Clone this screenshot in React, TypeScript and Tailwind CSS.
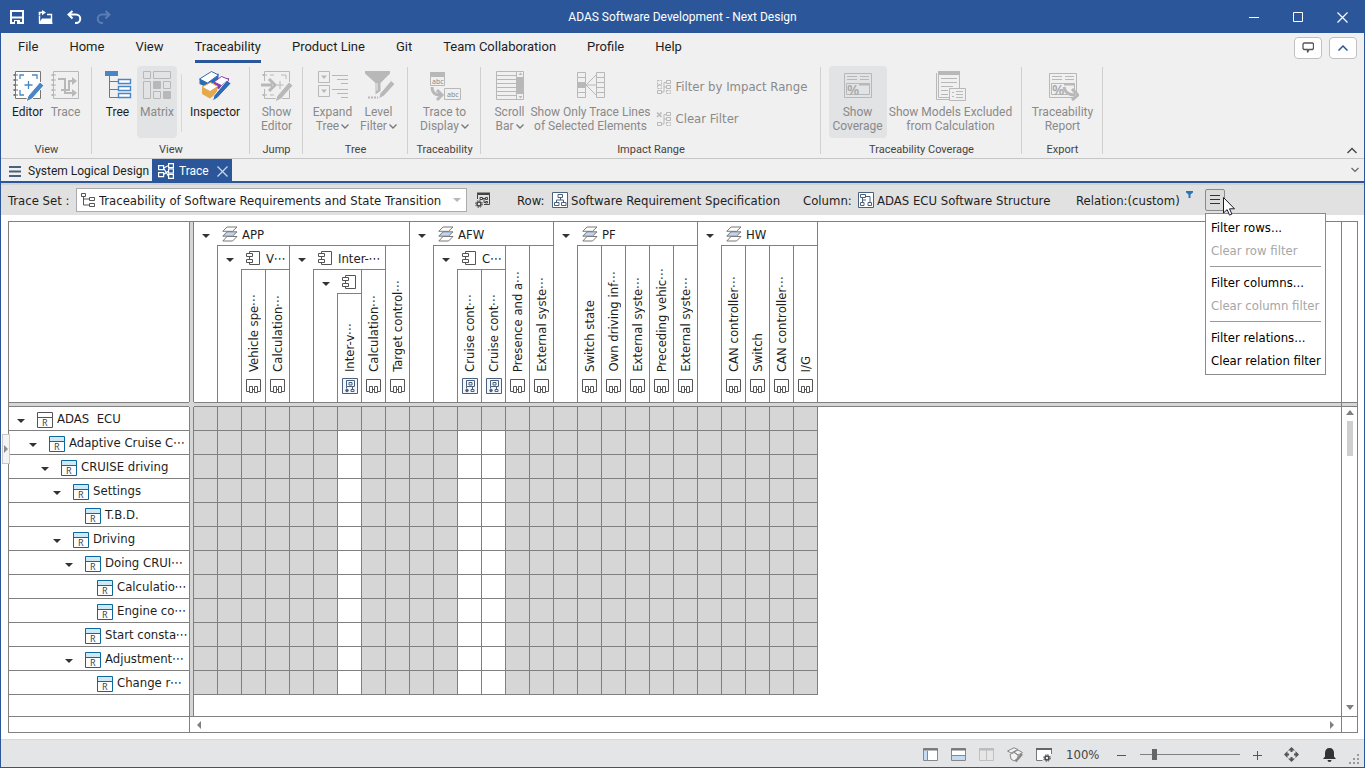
import React from 'react'
import { clsx } from 'clsx'

type RowNode = { label: string; level: number; leaf?: boolean; root?: boolean }

const rows: RowNode[] = [
  { label: 'ADAS  ECU', level: 0, root: true },
  { label: 'Adaptive Cruise C⋯', level: 1 },
  { label: 'CRUISE driving', level: 2 },
  { label: 'Settings', level: 3 },
  { label: 'T.B.D.', level: 4, leaf: true },
  { label: 'Driving', level: 3 },
  { label: 'Doing CRUI⋯', level: 4 },
  { label: 'Calculatio⋯', level: 5, leaf: true },
  { label: 'Engine co⋯', level: 5, leaf: true },
  { label: 'Start consta⋯', level: 4, leaf: true },
  { label: 'Adjustment⋯', level: 4 },
  { label: 'Change r⋯', level: 5, leaf: true },
]

type ColNode = { label: string; kind: 'layer' | 'component' | 'port' | 'state'; children?: ColNode[] }

const columns: ColNode[] = [
  {
    label: 'APP', kind: 'layer', children: [
      { label: 'V⋯', kind: 'component', children: [
        { label: 'Vehicle spe⋯', kind: 'port' },
        { label: 'Calculation⋯', kind: 'port' },
      ] },
      { label: 'Inter-⋯', kind: 'component', children: [
        { label: '', kind: 'component', children: [{ label: 'Inter-v⋯', kind: 'state' }] },
        { label: 'Calculation⋯', kind: 'port' },
      ] },
      { label: 'Target control⋯', kind: 'port' },
    ],
  },
  {
    label: 'AFW', kind: 'layer', children: [
      { label: 'C⋯', kind: 'component', children: [
        { label: 'Cruise cont⋯', kind: 'state' },
        { label: 'Cruise cont⋯', kind: 'state' },
      ] },
      { label: 'Presence and a⋯', kind: 'port' },
      { label: 'External syste⋯', kind: 'port' },
    ],
  },
  {
    label: 'PF', kind: 'layer', children: [
      { label: 'Switch state', kind: 'port' },
      { label: 'Own driving inf⋯', kind: 'port' },
      { label: 'External syste⋯', kind: 'port' },
      { label: 'Preceding vehic⋯', kind: 'port' },
      { label: 'External syste⋯', kind: 'port' },
    ],
  },
  {
    label: 'HW', kind: 'layer', children: [
      { label: 'CAN controller⋯', kind: 'port' },
      { label: 'Switch', kind: 'port' },
      { label: 'CAN controller⋯', kind: 'port' },
      { label: 'I/G', kind: 'port' },
    ],
  },
]

const COLUMN_COUNT = 26
const OPEN_COLUMNS = [6, 11, 12]

const menuTabs = ['File', 'Home', 'View', 'Traceability', 'Product Line', 'Git', 'Team Collaboration', 'Profile', 'Help']

export default function App() {
  return (
    <div className="flex h-screen w-full flex-col overflow-hidden border border-[#2b579a] bg-white font-['DejaVu_Sans_Condensed','Noto_Sans','Noto_Sans_CJK_JP',sans-serif] text-[13px] leading-4 text-[#1e1e1e]">
      <TitleBar />
      <MenuTabs />
      <Ribbon />
      <DocumentTabs />
      <TraceToolbar />
      <main className="relative flex min-h-0 flex-1 py-1.5 pr-1.5 pl-[7px]">
        <TraceMatrix />
        <button aria-label="Expand side panel" className="absolute top-[219px] left-px flex h-[30px] w-2 items-center justify-center border border-[#c8c8c8] bg-[#f4f4f4]">
          <svg width="4" height="8" viewBox="0 0 4 8"><path d="M0 0l4 4-4 4z" fill="#8c8c8c" /></svg>
        </button>
      </main>
      <StatusBar />
    </div>
  )
}

function TitleBar() {
  return (
    <header className="grid h-8 shrink-0 grid-cols-[1fr_auto_1fr] items-center bg-[#2b579a] font-['Roboto','Noto_Sans',sans-serif] text-xs text-white">
      <div className="flex items-center gap-3.5 pl-[9px]">
        <button aria-label="Save">
          <svg className="block" width="14" height="14" viewBox="0 0 14 14" fill="none" stroke="#fff" strokeWidth="2">
            <path d="M1 1h12v12H1zM1 7.500h12" /><path d="M4 10h6v4H4z" fill="#fff" stroke="none" /><path d="M5 11h2v3H5z" fill="#2b579a" stroke="none" />
          </svg>
        </button>
        <button aria-label="Open">
          <svg className="block" width="15" height="14" viewBox="0 0 15 14">
            <path d="M1.500 6v7M1 13.300h13.500M13.500 13V4.500H9" fill="none" stroke="#fff" strokeWidth="1.400" /><path d="M4 8.500h9L14 13H1z" fill="#fff" />
            <path d="M1.500 5.500V2.500H5" fill="none" stroke="#fff" strokeWidth="1.600" /><path d="M4 0l4 2.600-4 2.600z" fill="#fff" />
          </svg>
        </button>
        <button aria-label="Undo">
          <svg className="block" width="15" height="14" viewBox="0 0 15 14" fill="none" stroke="#fff" strokeWidth="2">
            <path d="M5.500 1L1.500 4.500l4 4M2 4.500h7a4 4 0 010 8.500H8" />
          </svg>
        </button>
        <button aria-label="Redo" disabled>
          <svg className="block" width="15" height="14" viewBox="0 0 15 14" fill="none" stroke="#5a7db3" strokeWidth="2">
            <path d="M9.500 1l4 3.500-4 4M13 4.500H6a4 4 0 000 8.500h1" />
          </svg>
        </button>
      </div>
      <h1>ADAS Software Development - Next Design</h1>
      <div className="flex justify-end">
        <button aria-label="Minimize" className="flex h-8 w-11 items-center justify-center">
          <svg width="11" height="11" viewBox="0 0 11 11"><path d="M0 5.500h10" stroke="#fff" /></svg>
        </button>
        <button aria-label="Maximize" className="flex h-8 w-11 items-center justify-center">
          <svg width="11" height="11" viewBox="0 0 11 11"><path d="M.5.5h9v9h-9z" fill="none" stroke="#fff" /></svg>
        </button>
        <button aria-label="Close" className="flex h-8 w-11 items-center justify-center">
          <svg width="11" height="11" viewBox="0 0 11 11"><path d="M.5.5l10 10M10.500.5l-10 10" stroke="#fff" strokeWidth="1.200" /></svg>
        </button>
      </div>
    </header>
  )
}

function MenuTabs() {
  return (
    <nav className="flex h-[33px] shrink-0 justify-between bg-[#f0f0f0] pr-[7px] pl-[17px] font-['Roboto','Noto_Sans',sans-serif] text-[13px]">
      <div className="flex gap-[31px]">
        {menuTabs.map((t) => (
          <button
            key={t}
            className={clsx('h-[30px] border-b-[3px] whitespace-nowrap', t === 'Traceability' ? 'border-[#2b579a]' : 'border-transparent')}
          >
            {t}
          </button>
        ))}
      </div>
      <div className="flex gap-[7px] pt-1">
        <button aria-label="Feedback" className="flex h-[22px] w-7 items-center justify-center rounded-sm border border-[#c0c0c0] bg-white">
          <svg width="12" height="12" viewBox="0 0 12 12" fill="none" stroke="#555" strokeWidth="1.300">
            <path d="M2 1h8.500l1 1v4.500l-1 1H7L5.500 10.500V7.500H2l-1-1V2z" />
          </svg>
        </button>
        <button aria-label="Collapse ribbon" className="flex h-[22px] w-7 items-center justify-center rounded-sm border border-[#c0c0c0] bg-white">
          <svg width="10" height="6" viewBox="0 0 10 6" fill="none" stroke="#2b579a" strokeWidth="1.500"><path d="M.5 5.500L5 1l4.500 4.500" /></svg>
        </button>
      </div>
    </nav>
  )
}

function Ribbon() {
  return (
    <section className="flex h-[93px] shrink-0 justify-between border-b border-[#c6c6c6] bg-[#f0f0f0] font-['Roboto','Noto_Sans',sans-serif]">
      <div className="flex">
        <RibbonGroup title="View" className="w-[91px]">
          <RibbonButton className="w-[38px]" label="Editor" icon={<EditorIcon />} />
          <RibbonButton className="w-[38px]" label="Trace" icon={<TraceIcon />} disabled />
        </RibbonGroup>
        <RibbonGroup title="View" className="w-[158px]">
          <RibbonButton className="w-[39px]" label="Tree" icon={<TreeIcon />} />
          <RibbonButton className="w-10" label="Matrix" icon={<MatrixIcon />} disabled active />
          <div className="mx-1 mt-2 h-[58px] w-px bg-[#d8d8d8]" />
          <RibbonButton className="w-[58px]" label="Inspector" icon={<InspectorIcon />} />
        </RibbonGroup>
        <RibbonGroup title="Jump" className="w-[53px]">
          <RibbonButton className="w-[46px]" label="Show" second="Editor" icon={<ShowEditorIcon />} disabled />
        </RibbonGroup>
        <RibbonGroup title="Tree" className="w-[105px]">
          <RibbonButton className="w-[46px]" label="Expand" second="Tree" drop icon={<ExpandIcon />} disabled />
          <RibbonButton className="w-[46px]" label="Level" second="Filter" drop icon={<LevelFilterIcon />} disabled />
        </RibbonGroup>
        <RibbonGroup title="Traceability" className="w-[73px]">
          <RibbonButton className="w-[60px]" label="Trace to" second="Display" drop icon={<TraceDisplayIcon />} disabled />
        </RibbonGroup>
        <RibbonGroup title="Impact Range" className="w-[340px]">
          <RibbonButton className="w-10" label="Scroll" second="Bar" drop icon={<ScrollBarIcon />} disabled />
          <RibbonButton className="w-[122px]" label="Show Only Trace Lines" second="of Selected Elements" icon={<TraceLinesIcon />} disabled />
          <div className="flex w-[161px] flex-col gap-4 pt-[13px] pl-1 font-['DejaVu_Sans_Condensed','Noto_Sans',sans-serif] text-[13px] text-[#8a8a8a]">
            <button disabled className="flex items-center gap-1 whitespace-nowrap"><ImpactIcon />Filter by Impact Range</button>
            <button disabled className="flex items-center gap-1 whitespace-nowrap"><ImpactIcon clear />Clear Filter</button>
          </div>
        </RibbonGroup>
        <RibbonGroup title="Traceability Coverage" className="w-[201px]">
          <RibbonButton className="w-[58px]" label="Show" second="Coverage" icon={<CoverageIcon />} disabled active />
          <RibbonButton className="w-[128px]" label="Show Models Excluded" second="from Calculation" icon={<ExcludedIcon />} disabled />
        </RibbonGroup>
        <RibbonGroup title="Export" className="w-[81px]">
          <RibbonButton className="w-[68px]" label="Traceability" second="Report" icon={<CoverageIcon arrow />} disabled />
        </RibbonGroup>
      </div>
      <button aria-label="Pin ribbon" className="mr-[7px] mb-1 self-end">
        <svg className="block" width="10" height="7" viewBox="0 0 10 7" fill="none" stroke="#444" strokeWidth="1.300"><path d="M.5 6L5 1.500 9.500 6" /></svg>
      </button>
    </section>
  )
}

function RibbonGroup({ title, className, children }: { title: string; className: string; children: React.ReactNode }) {
  return (
    <div className={clsx('relative flex shrink-0 flex-col pb-[5px]', className)}>
      <div className="flex h-[72px] justify-center">{children}</div>
      <div className="mt-1 text-center text-[11px] leading-4 whitespace-nowrap text-[#444]">{title}</div>
      <span className="absolute top-px right-0 h-[87px] w-px bg-[#d0d0d0]" />
    </div>
  )
}

function RibbonButton({ label, second, icon, className, disabled = false, active = false, drop = false }: {
  label: string; second?: string; icon: React.ReactNode; className: string; disabled?: boolean; active?: boolean; drop?: boolean
}) {
  return (
    <button
      disabled={disabled}
      className={clsx(
        'flex h-[72px] shrink-0 flex-col items-center gap-[3px] rounded-sm pt-1 text-xs leading-[14px] whitespace-nowrap',
        disabled ? 'text-[#8a8a8a]' : 'text-[#1e1e1e]',
        active && 'bg-[#e1e3e5]',
        className,
      )}
    >
      {icon}
      <span className="flex flex-col items-center">
        <span>{label}</span>
        {second && (
          <span className="flex items-center gap-0.5">
            {second}
            {drop && <svg width="8" height="5" viewBox="0 0 8 5" fill="none" stroke="#777" strokeWidth="1.300"><path d="M.5.5L4 4 7.500.5" /></svg>}
          </span>
        )}
      </span>
    </button>
  )
}

function DocumentTabs() {
  return (
    <div className="flex h-6 shrink-0 items-stretch justify-between border-b-2 border-[#2b579a] bg-[#f0f0f0] font-['Roboto','Noto_Sans',sans-serif] text-xs">
      <div className="flex">
        <button className="flex w-[151px] items-center gap-[7px] pt-0.5 pl-2 whitespace-nowrap">
          <svg className="shrink-0" width="12" height="11" viewBox="0 0 12 11"><path d="M0 1h12M0 5.500h12M0 10h12" stroke="#4a607c" strokeWidth="2" /></svg>
          System Logical Design
        </button>
        <div className="flex w-20 items-center bg-[#2b579a] pt-0.5 pl-1.5 text-white">
          <button className="flex items-center gap-[5px]">
            <svg width="16" height="16" viewBox="0 0 16 16" fill="none" stroke="#fff" strokeWidth="1.200">
              <path d="M.6 2.600h5v4h-5zM.6 9.600h5v4h-5zM10.600.6h4.800v4h-4.800zM10.600 6h4.800v4h-4.800zM10.600 11.400h4.800v4h-4.800zM5.600 5l5-2.500M5.600 11.600l5-3.600M5.600 5l5 8.500" />
            </svg>
            Trace
          </button>
          <button aria-label="Close Trace" className="ml-2">
            <svg className="block" width="11" height="11" viewBox="0 0 11 11"><path d="M.5.5l10 10M10.500.5l-10 10" stroke="#c8d6ea" strokeWidth="1.300" /></svg>
          </button>
        </div>
      </div>
      <button aria-label="Tab list" className="mr-[5px]">
        <svg width="8" height="6" viewBox="0 0 8 6" fill="none" stroke="#666" strokeWidth="1.200"><path d="M.5 1L4 4.500 7.500 1" /></svg>
      </button>
    </div>
  )
}

function TraceToolbar() {
  return (
    <div className="flex h-8 shrink-0 items-center border-t-2 border-[#d0d2d4] bg-[#e1e1e1] pl-[7px] whitespace-nowrap">
      <label htmlFor="trace-set" className="w-[68px] pt-0.5">Trace Set :</label>
      <div className="flex h-6 w-[391px] items-center border border-[#ababab] bg-white pr-[5px] pl-1">
        <svg className="shrink-0" width="14" height="14" viewBox="0 0 14 14" fill="none" stroke="#555">
          <path d="M.5.5h4v3h-4zM8.500 4.500h5v3h-5zM8.500 10.500h5v3h-5zM2.500 3.500v8.500h6M2.500 6h6" />
        </svg>
        <select id="trace-set" className="min-w-0 flex-1 appearance-none bg-transparent pt-0.5 pl-1 outline-none">
          <option>Traceability of Software Requirements and State Transition</option>
        </select>
        <svg className="shrink-0" width="8" height="4" viewBox="0 0 8 4"><path d="M0 0h8L4 4z" fill="#b8b8b8" /></svg>
      </div>
      <button aria-label="Trace set settings" className="ml-2">
        <svg className="block" width="16" height="16" viewBox="0 0 16 16" fill="none" stroke="#444">
          <path d="M2.500 7V2.500h12v10H9" /><path d="M2 1.500h13" strokeWidth="2" />
          <path d="M5 5.500h2.500v2H5zM10.500 5.500h2v2h-2zM10.500 9.500h2v1.500h-2zM7.500 6.500h3M9 6.500v4h1.500" />
          <circle cx="4" cy="12" r="2" strokeWidth="1.500" /><circle cx="4" cy="12" r="3.400" strokeDasharray="1.400 1.270" />
        </svg>
      </button>
      <div className="ml-[26px] flex w-[286px] items-center">
        <span className="w-[35px] pt-0.5">Row:</span>
        <svg width="16" height="16" viewBox="0 0 16 16" fill="none" stroke="#4a607c">
          <path d="M.5.5h15v15H.5z" fill="#fff" /><path d="M6 2.500h4.500v3H6zM2.500 10.500H7v3H2.500zM9.500 10.500H14v3H9.500zM8.500 5.500V8M4.500 10.500V8h7v2.500" />
        </svg>
        <span className="pt-0.5 pl-[3px]">Software Requirement Specification</span>
      </div>
      <div className="flex w-[273px] items-center">
        <span className="w-[55px] pt-0.5">Column:</span>
        <svg width="16" height="16" viewBox="0 0 16 16" fill="none" stroke="#4a607c">
          <path d="M.5.5h15v15H.5z" fill="#fff" /><path d="M2.500 2.500h5v3h-5zM2.500 10.500H6v3H2.500zM10 10.500h3.500v3H10zM4.500 5.500v5M7.500 4.500H12v6M4.500 8h3.500" />
        </svg>
        <span className="pt-0.5 pl-[3px]">ADAS ECU Software Structure</span>
      </div>
      <div className="flex w-[129px]">
        <span className="w-[110px] pt-0.5">Relation:(custom)</span>
        <svg width="7" height="7" viewBox="0 0 7 7"><path d="M0 0h7v1.500L4.500 3.500V7h-2V3.500L0 1.500z" fill="#2e75b6" /></svg>
      </div>
      <div className="relative">
        <button aria-label="Filter menu" aria-expanded className="flex h-[22px] w-5 items-center justify-center rounded-xs border border-[#8a8a8a] bg-[#dcdcdc]">
          <svg width="10" height="10" viewBox="0 0 10 10"><path d="M0 .5h10M0 4.500h10M0 8.500h10" stroke="#333" /></svg>
        </button>
        <FilterMenu />
        <svg className="absolute top-2 left-[18px] z-30" width="12" height="19" viewBox="0 0 12 19">
          <path d="M.5.5v15.500l3.600-3.400 2.400 5.500 2.400-1-2.400-5.300h5z" fill="#fff" stroke="#1a1a2a" />
        </svg>
      </div>
    </div>
  )
}

function FilterMenu() {
  return (
    <div role="menu" className="absolute top-6 left-0 z-20 flex w-[121px] flex-col border border-[#8a8a8a] bg-white py-0.5">
      <MenuItem label="Filter rows..." />
      <MenuItem label="Clear row filter" disabled />
      <hr className="mx-1 my-1 border-[#9a9a9a]" />
      <MenuItem label="Filter columns..." />
      <MenuItem label="Clear column filter" disabled />
      <hr className="mx-1 my-1 border-[#9a9a9a]" />
      <MenuItem label="Filter relations..." />
      <MenuItem label="Clear relation filter" />
    </div>
  )
}

function MenuItem({ label, disabled = false }: { label: string; disabled?: boolean }) {
  return (
    <button role="menuitem" disabled={disabled} className={clsx('h-[23px] pl-[5px] text-left whitespace-nowrap', disabled ? 'text-[#a6a6a6]' : 'text-black')}>
      {label}
    </button>
  )
}

function TraceMatrix() {
  return (
    <div className="grid min-w-0 flex-1 grid-cols-[180px_5px_1fr_16px] grid-rows-[180px_5px_1fr_16px] border border-[#808080]">
      <div />
      <div className="border-x border-[#808080] bg-[#d6d6d6]" />
      <div className="flex min-w-0 overflow-hidden">
        {columns.map((c) => <ColumnHeader key={c.label} node={c} />)}
      </div>
      <div className="border-l border-[#808080]" />

      <div className="border-y border-[#808080] bg-[#d6d6d6]" />
      <div className="bg-[#d6d6d6]" />
      <div className="border-y border-[#808080] bg-[#d6d6d6]" />
      <div className="border-y border-l border-[#808080] bg-[#d6d6d6]" />

      <ul className="min-h-0 overflow-hidden">
        {rows.map((r) => <TreeRow key={r.label} row={r} />)}
      </ul>
      <div className="border-x border-[#808080] bg-[#d6d6d6]" />
      <div className="min-h-0 min-w-0 overflow-hidden">
        <table aria-label="Trace matrix" className="w-[624px] table-fixed border-separate border-spacing-0">
          <tbody>
            {rows.map((r, y) => (
              <tr key={r.label}>
                {Array.from({ length: COLUMN_COUNT }, (_, x) => (
                  <td
                    key={x}
                    className={clsx('h-6 border-r border-b border-[#808080] p-0', y > 0 && OPEN_COLUMNS.includes(x) ? 'bg-white' : 'bg-[#d6d6d6]')}
                  />
                ))}
              </tr>
            ))}
          </tbody>
        </table>
      </div>
      <div className="flex flex-col items-center border-l border-[#808080] pt-[3px] pb-1.5">
        <svg width="8" height="5" viewBox="0 0 8 5"><path d="M0 5l4-5 4 5z" fill="#808080" /></svg>
        <div className="mt-1.5 h-[35px] w-1.5 bg-[#cfcfcf]" />
        <svg className="mt-auto" width="8" height="5" viewBox="0 0 8 5"><path d="M0 0h8L4 5z" fill="#808080" /></svg>
      </div>

      <div className="border-t border-[#808080]" />
      <div className="border-t border-l border-[#808080]" />
      <div className="flex items-center justify-between border-t border-[#808080] pr-[7px] pl-[3px]">
        <svg width="4" height="8" viewBox="0 0 4 8"><path d="M4 0v8L0 4z" fill="#808080" /></svg>
        <svg width="4" height="8" viewBox="0 0 4 8"><path d="M0 0v8l4-4z" fill="#808080" /></svg>
      </div>
      <div className="border-t border-l border-[#808080]" />
    </div>
  )
}

function ColumnHeader({ node }: { node: ColNode }) {
  if (!node.children) {
    return (
      <div className="flex w-6 shrink-0 flex-col items-center justify-end gap-1.5 border-r border-[#808080] pb-2 whitespace-nowrap">
        <span className="rotate-180 [writing-mode:vertical-rl] [text-orientation:sideways]">{node.label}</span>
        <NodeIcon kind={node.kind} />
      </div>
    )
  }
  return (
    <div className="flex shrink-0 flex-col">
      <div className="flex h-[23px] items-center border-r border-[#808080] pl-2 whitespace-nowrap">
        <Caret />
        <NodeIcon kind={node.kind} />
        {/* zero width keeps long titles from widening the group */}
        {node.label && <span className="ml-1 w-0 flex-1 pt-0.5">{node.label}</span>}
      </div>
      <div className="flex flex-1">
        <div className="w-6 border-r border-[#808080]" />
        <div className="flex border-t border-[#808080]">
          {node.children.map((c, i) => <ColumnHeader key={i} node={c} />)}
        </div>
      </div>
    </div>
  )
}

function TreeRow({ row }: { row: RowNode }) {
  const color = row.root ? '#555' : '#0b699e'
  return (
    <li className="flex h-6 items-center border-b border-[#808080] whitespace-pre" style={{ paddingLeft: 8 + row.level * 12 }}>
      {row.leaf ? <span className="w-5 shrink-0" /> : <Caret />}
      <svg className="mt-0.5 shrink-0" width="16" height="16" viewBox="0 0 16 16">
        <path d="M.5.5h15v15H.5z" fill="#fff" stroke={color} />
        {!row.root && <path d="M1 1h14v4H1z" fill="#cfe8f6" />}
        <path d="M1 5.500h14" stroke={color} />
        <text x="5" y="14" fontSize="9" fontFamily="Noto Sans" fill="#444">R</text>
      </svg>
      <span className="ml-1">{row.label}</span>
    </li>
  )
}

function Caret() {
  return (
    <button aria-label="Collapse" className="mt-1 w-5 shrink-0">
      <svg className="block" width="8" height="4" viewBox="0 0 8 4"><path d="M0 0h8L4 4z" fill="#333" /></svg>
    </button>
  )
}

function NodeIcon({ kind }: { kind: ColNode['kind'] }) {
  if (kind === 'layer') {
    return (
      <svg className="shrink-0" width="16" height="16" viewBox="0 0 16 16" fill="#fff" stroke="#777">
        <path d="M5 10.500h10l-4.500 4.500H.8z" /><path d="M5 5.800h10L10.500 10.200H.8z" fill="#c3d5ea" /><path d="M5 1h10l-4.500 4.300H.8z" />
      </svg>
    )
  }
  if (kind === 'component') {
    return (
      <svg className="shrink-0" width="16" height="16" viewBox="0 0 16 16" fill="#fff" stroke="#555">
        <path d="M3.500 1.500h10v13h-10z" /><path d="M.5 3.500h6v3h-6zM.5 9.500h6v3h-6z" />
      </svg>
    )
  }
  if (kind === 'port') {
    return (
      <svg className="shrink-0" width="16" height="16" viewBox="0 0 16 16" fill="#fff" stroke="#555">
        <path d="M3.500 13.500H.5v-12h14v12h-3" /><path d="M3.500 8.500h3v6h-3zM8.500 8.500h3v6h-3zM6.500 11.500h2" />
      </svg>
    )
  }
  return (
    <svg className="shrink-0" width="16" height="16" viewBox="0 0 16 16" fill="none" stroke="#4a607c">
      <path d="M.5.5h15v15H.5z" fill="#f4f7fa" /><path d="M4.500 2.500h8v6h-8zM7 4.500h3v2.500H7zM4.500 8.500v2" /><circle cx="5" cy="12.500" r="1.300" fill="#4a607c" /><path d="M9 11.500h3v2H9zM10.500 8.500v3" />
    </svg>
  )
}

function StatusBar() {
  return (
    <footer className="flex h-7 shrink-0 items-center justify-end border-t border-[#d6d9dc] bg-[#e3e5e7] pt-0.5 pr-0.5 text-[#444]">
      <div className="flex items-center gap-[13px]">
        <button aria-label="Left panel"><svg className="block" width="15" height="13" viewBox="0 0 15 13"><path d="M.5.5h14v12H.5z" fill="#fff" stroke="#888" /><path d="M1 2.500h4V12H1z" fill="#c3dcf3" /><path d="M0 1.500h15" stroke="#777" strokeWidth="2" /><path d="M4.500 3v9" stroke="#888" /></svg></button>
        <button aria-label="Bottom panel"><svg className="block" width="15" height="13" viewBox="0 0 15 13"><path d="M.5.5h14v12H.5z" fill="#fff" stroke="#888" /><path d="M1 8h13v4H1z" fill="#c3dcf3" /><path d="M0 1.500h15" stroke="#777" strokeWidth="2" /><path d="M1 7.500h13" stroke="#888" /></svg></button>
        <button aria-label="Split panel" disabled><svg className="block" width="15" height="13" viewBox="0 0 15 13"><path d="M.5.5h14v12H.5zM7.500 2v10" fill="#e6e6e6" stroke="#c0c0c0" /><path d="M0 1.500h15" stroke="#bbb" strokeWidth="2" /></svg></button>
        <button aria-label="Inspector">
          <svg className="block" width="16" height="16" viewBox="0 0 16 16" fill="#f2f2f2" stroke="#888">
            <path d="M.5 4L7 .8l4 1.700-7 3.500zM7 5l4-2 4.500 2.500L11 8zM3 7.500L7 5.500l4 2.500v3.500l-4 2.500-3-2z" /><path d="M15 7l-6.500 7.500" strokeWidth="2.500" />
          </svg>
        </button>
        <button aria-label="View settings">
          <svg className="block" width="16" height="14" viewBox="0 0 16 14" fill="none" stroke="#444">
            <path d="M6.500 12.500H.5v-12h15V6" fill="#fff" stroke="#777" /><path d="M0 1h16" strokeWidth="2" stroke="#666" /><circle cx="11" cy="10" r="2" strokeWidth="1.500" /><circle cx="11" cy="10" r="3.300" strokeDasharray="1.400 1.200" />
          </svg>
        </button>
      </div>
      <span className="ml-[14px] w-9">100%</span>
      <button aria-label="Zoom out" className="ml-[15px]"><svg className="block" width="10" height="10" viewBox="0 0 10 10"><path d="M0 5.500h9" stroke="#555" /></svg></button>
      <input
        type="range"
        aria-label="Zoom"
        min={0}
        max={100}
        defaultValue={13}
        className="mx-[13px] h-3 w-[100px] appearance-none bg-[linear-gradient(#808080,#808080)] bg-[length:100%_1px] bg-center bg-no-repeat [&::-webkit-slider-thumb]:h-[11px] [&::-webkit-slider-thumb]:w-[5px] [&::-webkit-slider-thumb]:appearance-none [&::-webkit-slider-thumb]:bg-[#666]"
      />
      <button aria-label="Zoom in"><svg className="block" width="10" height="10" viewBox="0 0 10 10"><path d="M0 5.500h9M4.500 1v9" stroke="#555" /></svg></button>
      <button aria-label="Fit to window" className="ml-[21px]">
        <svg className="block" width="15" height="15" viewBox="0 0 15 15" fill="#555">
          <path d="M7.500 0l3.500 3.500H4zM7.500 15L4 11.500h7zM0 7.500L3.500 4v7zM15 7.500L11.500 11V4z" /><path d="M6.500 3h2v2h-2zM6.500 10h2v2h-2zM3 6.500h2v2H3zM10 6.500h2v2h-2z" />
        </svg>
      </button>
      <button aria-label="Notifications" className="ml-6">
        <svg className="block" width="13" height="14" viewBox="0 0 13 14" fill="#333"><path d="M6.500 0C9.500 0 11 2 11 5v3.500L13 11H0l2-2.500V5c0-3 1.500-5 4.500-5zM4.500 12h4a2 2 0 01-4 0z" /></svg>
      </button>
      <svg className="ml-3 self-end" width="14" height="14" viewBox="0 0 14 14" fill="#999"><path d="M9 1h2v2H9zM5 5h2v2H5zM9 5h2v2H9zM1 9h2v2H1zM5 9h2v2H5zM9 9h2v2H9z" /></svg>
    </footer>
  )
}

/* ribbon icons, all on a 32px grid */

const GREY = '#b8b8b8'

function EditorIcon({ color = '#777', accent = '#4a86c5', paper = '#fff' }: { color?: string; accent?: string; paper?: string }) {
  return (
    <svg className="shrink-0" width="32" height="32" viewBox="0 0 32 32" fill="none">
      <path d="M3.500 1.500h25v27h-25z" fill={paper} stroke={color} />
      <path d="M1.500 5h4M1.500 10h4M1.500 15h4M1.500 20h4M1.500 25h4" stroke={color} strokeWidth="2" strokeDasharray="2 1" />
      <path d="M8 9V5h4M20 5h5v4M8 20v5h4M16.500 11v8M12.500 15h8" stroke={accent} strokeWidth="1.300" />
      <path d="M28 12l4 3.500-12 13.500-6 3 2-6z" fill={accent} stroke={paper} />
    </svg>
  )
}

function ShowEditorIcon() {
  return (
    <svg className="shrink-0" width="32" height="32" viewBox="0 0 32 32" fill="none" stroke={GREY}>
      <path d="M3.500 11V1.500h25v27h-25V19" /><path d="M1.500 5h4M1.500 25h4" strokeWidth="2" strokeDasharray="2 1" />
      <path d="M9 5h4M20 5h5v4M9 25h4M19 11v8M15.500 15h7" />
      <path d="M0 15h11M8 9l6 6-6 6" strokeWidth="3" />
      <path d="M28 12l4 3.500-12 13.500-6 3 2-6z" fill={GREY} stroke="#f0f0f0" />
    </svg>
  )
}

function TraceIcon() {
  return (
    <svg className="shrink-0" width="32" height="32" viewBox="0 0 32 32" fill="none" stroke={GREY}>
      <path d="M3.500 1.500h25v27h-25z" /><path d="M1.500 5h4M1.500 10h4M1.500 15h4M1.500 20h4M1.500 25h4" strokeWidth="2" strokeDasharray="2 1" />
      <path d="M8 9h7v14h8M11 20h8V11h4" strokeWidth="2" />
      <path d="M22 7l5 4-5 4zM22 19l5 4-5 4z" fill={GREY} stroke="none" />
    </svg>
  )
}

function TreeIcon() {
  return (
    <svg className="shrink-0" width="32" height="32" viewBox="0 0 32 32" fill="#fff" stroke="#4a86c5">
      <path d="M7.500 6v21.500H20M7.500 11.500H20M7.500 19.500H20" fill="none" stroke="#777" />
      <path d="M3 1h13v5H3z" fill="#4a86c5" stroke="none" />
      <path d="M16.500 9.500h12v4h-12zM16.500 16.500h12v4h-12zM16.500 23.500h12v4h-12z" strokeWidth="1.400" />
    </svg>
  )
}

function MatrixIcon() {
  return (
    <svg className="shrink-0" width="32" height="32" viewBox="0 0 32 32" fill="none" stroke={GREY}>
      <path d="M2.500 1.500h7v7h-7zM12.500 1.500h17v7h-17zM2.500 11.500h7v17h-7zM22.500 11.500h7v7h-7zM12.500 21.500h7v7h-7z" />
      <path d="M12.500 11.500h7v7h-7zM22.500 21.500h7v7h-7z" fill={GREY} />
    </svg>
  )
}

function InspectorIcon() {
  return (
    <svg className="shrink-0" width="34" height="32" viewBox="0 0 34 32" strokeLinejoin="round">
      <path d="M1.500 9v5l9 4 10-9V3.500z" fill="#2b6cb5" /><path d="M1.500 9L13.500 1.500l7 3.500L9.500 13z" fill="#fff" stroke="#2b6cb5" />
      <path d="M16 12v5l7 3 8-9V8z" fill="#8a3fa8" /><path d="M16 12l7.500-5.500L31 9.500 23.500 15.500z" fill="#fff" stroke="#8a3fa8" />
      <path d="M4 17v7l8 4.500 7-5.500v-7z" fill="#e5a84b" /><path d="M4 17l8.500-4.500 7.500 4-8 5z" fill="#fff" stroke="#e5a84b" />
      <path d="M29 10l4 3.500L19.500 28l-5 3 1.500-5.500z" fill="#2b6cb5" stroke="#f0f0f0" />
    </svg>
  )
}

function ExpandIcon() {
  return (
    <svg className="shrink-0" width="32" height="32" viewBox="0 0 32 32" fill="none" stroke={GREY}>
      <path d="M1.500 1.500h11v11h-11zM1.500 15.500h11v11h-11zM15 5.500h16M20 9.500h11M24 13.500h7M15 19.500h16M20 23.500h11M24 27.500h7" />
      <path d="M4 5.500h6l-3 3.500zM4 19.500h6l-3 3.500z" fill={GREY} stroke="none" />
    </svg>
  )
}

function LevelFilterIcon() {
  return (
    <svg className="shrink-0" width="32" height="32" viewBox="0 0 32 32" fill={GREY}>
      <path d="M2 1h25v2.500L17.500 13v8l-5 3.500V13L2 3.500z" /><path d="M14 13v7.500" stroke="#f0f0f0" />
      <path d="M28 10.500l4 3.500-11 12-5.500 3 1.500-5.500z" stroke="#f0f0f0" /><path d="M5 27.500h10" stroke={GREY} strokeWidth="2" strokeDasharray="2 1" />
    </svg>
  )
}

function TraceDisplayIcon() {
  return (
    <svg className="shrink-0" width="32" height="32" viewBox="0 0 32 32" fill="none" stroke={GREY}>
      <path d="M1.500 2.500h14v13h-14z" /><path d="M1 2h15v5H1z" fill={GREY} stroke="none" /><path d="M15.500 18.500h16v11h-16z" />
      <path d="M3 17c0 6 3 8 8 8M8 20l5 5-5 5" strokeWidth="3" />
      <text x="3" y="14" fontSize="7" fontFamily="Noto Sans" fill="#888" stroke="none">abc</text>
      <text x="18" y="27" fontSize="7" fontFamily="Noto Sans" fill="#888" stroke="none">abc</text>
    </svg>
  )
}

function ScrollBarIcon() {
  return (
    <svg className="shrink-0" width="32" height="32" viewBox="0 0 32 32" fill="none" stroke={GREY}>
      <path d="M2.500 1.500h27v28h-27zM22.500 1.500v28M2 5.500h20M2 9.500h20M2 13.500h20M2 17.500h20M2 21.500h20M2 25.500h20" />
      <path d="M23 7h7v17h-7z" fill={GREY} stroke="none" /><path d="M24.500 5l2-2.500 2 2.500zM24.500 26h4l-2 2.500z" fill={GREY} stroke="none" />
    </svg>
  )
}

function TraceLinesIcon() {
  return (
    <svg className="shrink-0" width="32" height="32" viewBox="0 0 32 32" fill="none" stroke={GREY}>
      <path d="M2.500 2.500h8v25h-8zM21.500 2.500h8v25h-8zM2 7.500h8M2 12.500h8M2 17.500h8M2 22.500h8M21 7.500h8M21 12.500h8M21 17.500h8M21 22.500h8M11 15l10-10M11 15h10M11 15l10 10" />
      <path d="M2 12h9v6H2z" fill={GREY} stroke="none" />
    </svg>
  )
}

function ImpactIcon({ clear = false }: { clear?: boolean }) {
  return (
    <svg className="shrink-0" width="16" height="16" viewBox="0 0 16 16" fill="none" stroke={GREY}>
      {clear
        ? <path d="M1 1.500l4.500 4.500M5.500 1.500L1 6" strokeWidth="1.500" />
        : <path d="M1.500 1.500h4v4h-4zM1.500 6.500h4v3h-4z" strokeDasharray="2 1" />}
      <path d="M1.500 11.500h4v3h-4zM5.500 13H8V3.500h2M8 8h2M10.500 1.500h4v3h-4zM10.500 6.500h4v3h-4z" /><path d="M10.500 11.500h4v3h-4z" strokeDasharray="2 1" />
    </svg>
  )
}

function CoverageIcon({ arrow = false }: { arrow?: boolean }) {
  return (
    <svg className="shrink-0" width="32" height="32" viewBox="0 0 32 32" fill="none" stroke={GREY}>
      <path d="M2.500 3.500h27v24h-27zM5 6.500h10M5 9.500h10M18 6.500h9M18 9.500h9M4.500 13.500h23v11h-23z" /><path d="M17 14.500h10" strokeWidth="2" />
      <text x="5" y="25" fontSize="14" fontWeight="600" fontFamily="Noto Sans" fill="#aaa" stroke="none">%</text>
      {arrow && <path d="M17 17c1 6 5 8 11 8M25 19l6 6-6 5" strokeWidth="3" />}
    </svg>
  )
}

function ExcludedIcon() {
  return (
    <svg className="shrink-0" width="32" height="32" viewBox="0 0 32 32" fill="none" stroke={GREY}>
      <path d="M1.500 3v26.500H14" /><path d="M3.500 1.500h21v26h-21zM6 8.500h16M6 12.500h16M6 16.500h12M6 20.500h7M6 24.500h7" /><path d="M3 1h22v4H3z" fill={GREY} stroke="none" />
      <path d="M14.500 18.500h16v12h-16z" fill="#f0f0f0" /><path d="M17 22.500h2M17 26.500h2M21 21.500h7M21 24.500h7M21 27.500h7" />
    </svg>
  )
}
